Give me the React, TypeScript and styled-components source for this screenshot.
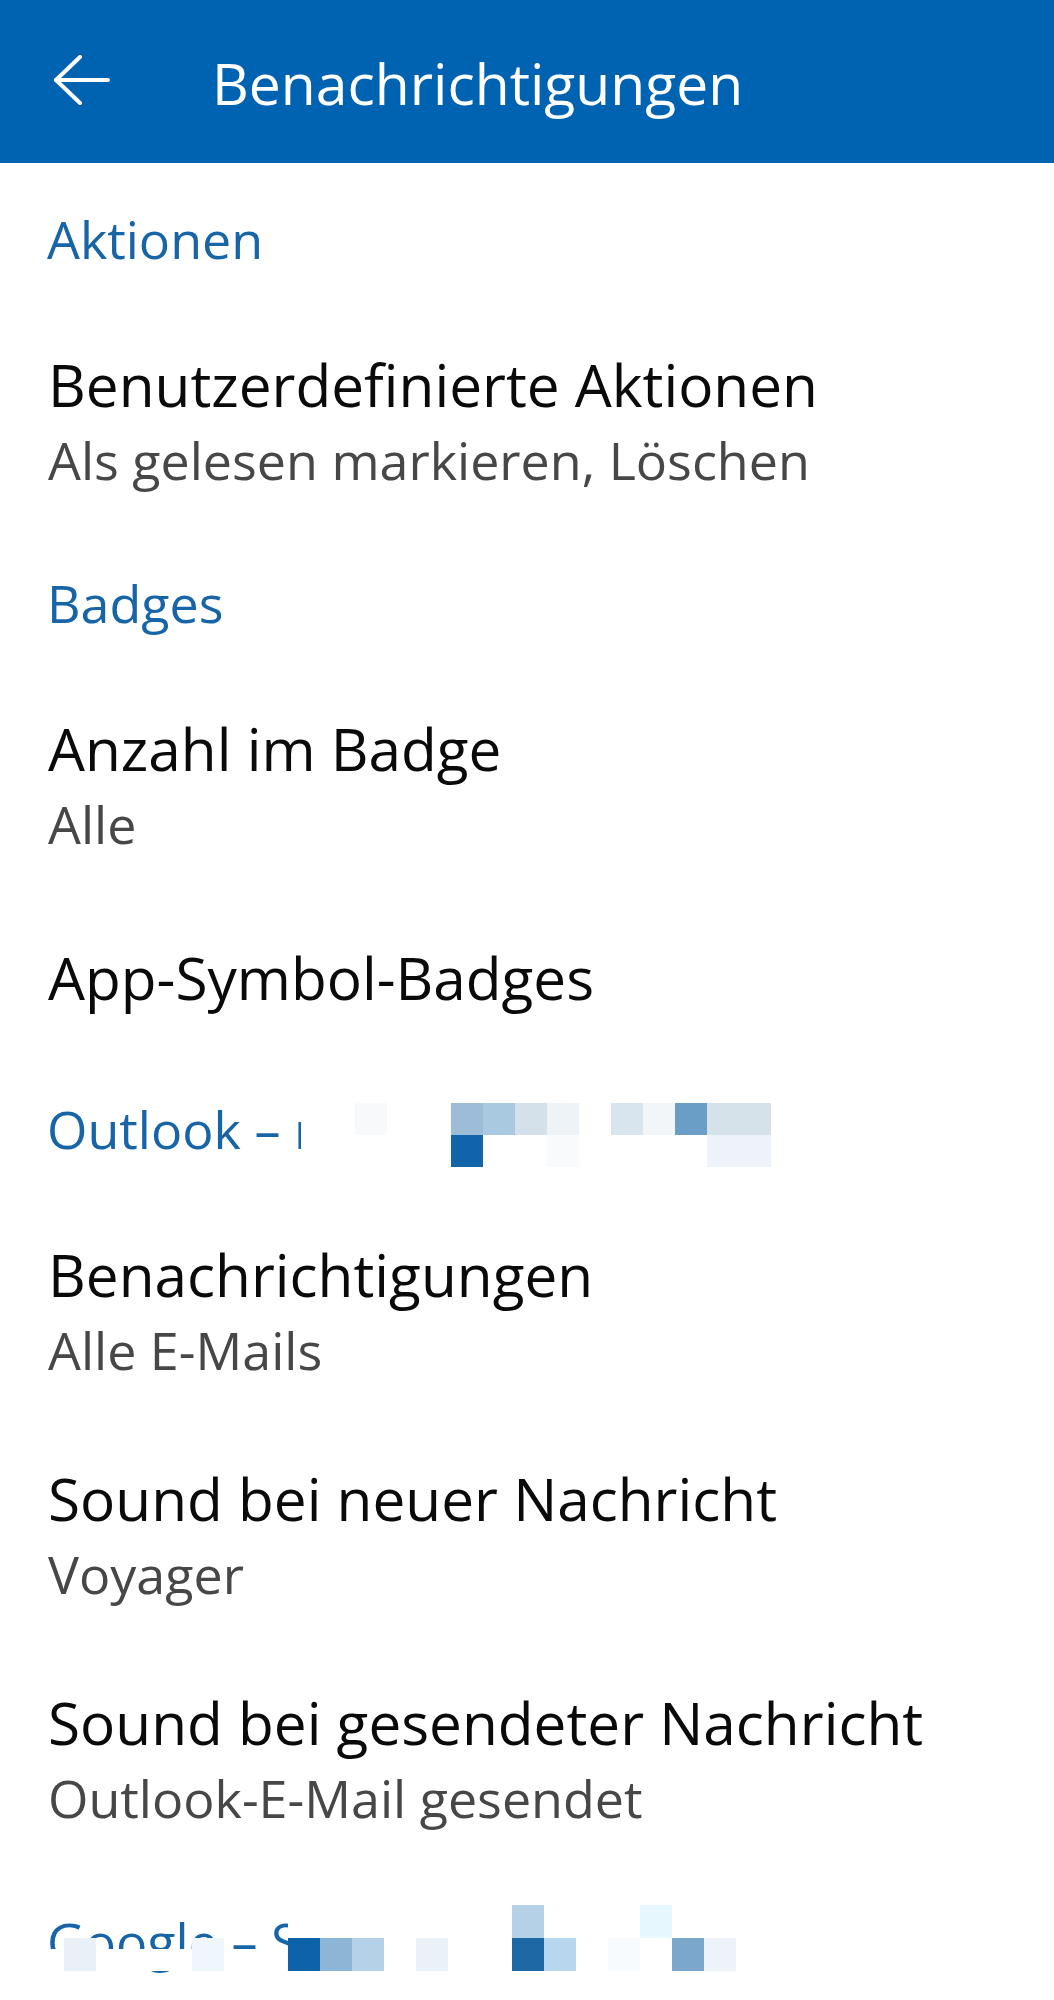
import React from "react";
import styled, { createGlobalStyle } from "styled-components";

const Global = createGlobalStyle`
  html, body { margin: 0; padding: 0; background: #ffffff; }
  body { font-family: "Open Sans", "Noto Sans", sans-serif; -webkit-font-smoothing: antialiased; }
  * { box-sizing: border-box; }
`;

const Page = styled.div`
  width: 1054px;
  min-height: 2000px;
  background: #ffffff;
  overflow: hidden;
`;

const AppBar = styled.header`
  height: 163px;
  background: #0063b1;
  display: flex;
  align-items: center;
  padding-left: 53px;
  gap: 102px;
`;

const BackIcon = styled.svg`
  width: 57px;
  height: 50px;
  flex: none;
  margin-top: -4px;
`;

const AppTitle = styled.h1`
  margin: 0;
  font-family: "Open Sans", sans-serif;
  font-weight: 400;
  font-size: 57px;
  line-height: 1;
  color: #ffffff;
  margin-top: 4px;
`;

const List = styled.main`
  padding-top: 5px;
`;

const SectionHeader = styled.div`
  position: relative;
  height: 140px;
  display: flex;
  align-items: center;
  padding-left: 47px;
  font-size: 52px;
  color: #1764a6;
  white-space: nowrap;
`;

const Item = styled.div<{ $single?: boolean }>`
  padding: ${(p) => (p.$single ? "41px" : "36px")} 0 ${(p) => (p.$single ? "41px" : "36px")} 48px;
  display: flex;
  flex-direction: column;
`;

const Title = styled.div`
  font-size: 58.5px;
  line-height: 80px;
  color: #0a0a0a;
  white-space: nowrap;
`;

const Summary = styled.div`
  font-size: 52px;
  line-height: 72px;
  color: #474747;
  white-space: nowrap;
`;

const Mosaic = styled.div<{ $left: number; $top: number; $cols: string; $rows: string }>`
  position: absolute;
  left: ${(p) => p.$left}px;
  top: ${(p) => p.$top}px;
  display: grid;
  grid-template-columns: ${(p) => p.$cols};
  grid-template-rows: ${(p) => p.$rows};
`;

const Cell = styled.div<{ $c: string; $col: number; $row: string }>`
  background: ${(p) => p.$c};
  grid-column: ${(p) => p.$col};
  grid-row: ${(p) => p.$row};
`;

const W = "#ffffff";

type MCell = { col: number; row: string; c: string };

// Outlook mosaic: leading pad column + 14 columns of 32px, two rows
const outlookRows: string[][] = [
  [W, W, "#f7f9fb", W, W, "#9dbcd8", "#a8c9e0", "#d5e1ea", "#eef3f7", W, "#d8e5ee", "#f3f6f9", "#6a9ec6", "#d6e2ea", "#d6e2ea"],
  [W, W, W, W, W, "#1164a9", W, W, "#f8fafc", W, W, W, W, "#eef3f9", "#eef3f9"],
];
const outlookCells: MCell[] = outlookRows.flatMap((r, ri) =>
  r.map((c, ci) => ({ col: ci + 1, row: String(ri + 1), c }))
);

// Google mosaic: 23 columns; rows: A (33px), B-top (11px), B-bottom (22px)
const googleA: Record<number, string> = { 15: "#b5d1e8", 19: "#e6f7fd" };
const googleB: Record<number, string> = {
  1: "#e8f1f8",
  5: "#eef7fb",
  8: "#0d62a8",
  9: "#8db5d5",
  10: "#b5d1e8",
  12: "#eaf2f9",
  15: "#1e68a5",
  16: "#b8d6ee",
  18: "#f8fbfd",
  20: "#7aa7cb",
  21: "#eef3f9",
};
const googleCells: MCell[] = [];
for (let i = 0; i < 22; i++) {
  if (i >= 8) googleCells.push({ col: i + 1, row: "1", c: googleA[i] ?? W });
  if (googleB[i]) googleCells.push({ col: i + 1, row: "2 / 4", c: googleB[i] });
  else googleCells.push({ col: i + 1, row: "3", c: W });
}

type Entry =
  | { kind: "section"; label: string; mosaic?: "outlook" | "google" }
  | { kind: "item"; title: string; summary?: string };

const entries: Entry[] = [
  { kind: "section", label: "Aktionen" },
  { kind: "item", title: "Benutzerdefinierte Aktionen", summary: "Als gelesen markieren, Löschen" },
  { kind: "section", label: "Badges" },
  { kind: "item", title: "Anzahl im Badge", summary: "Alle" },
  { kind: "item", title: "App-Symbol-Badges" },
  { kind: "section", label: "Outlook – n", mosaic: "outlook" },
  { kind: "item", title: "Benachrichtigungen", summary: "Alle E-Mails" },
  { kind: "item", title: "Sound bei neuer Nachricht", summary: "Voyager" },
  { kind: "item", title: "Sound bei gesendeter Nachricht", summary: "Outlook-E-Mail gesendet" },
  { kind: "section", label: "Google – S", mosaic: "google" },
];

function OutlookMosaic() {
  return (
    <Mosaic $left={301} $top={45} $cols="22px repeat(14, 32px)" $rows="32px 32px">
      {outlookCells.map((m, i) => (
        <Cell key={i} $c={m.c} $col={m.col} $row={m.row} />
      ))}
    </Mosaic>
  );
}

function GoogleMosaic() {
  return (
    <Mosaic $left={32} $top={35} $cols="repeat(23, 32px)" $rows="33px 11px 22px">
      {googleCells.map((m, i) => (
        <Cell key={i} $c={m.c} $col={m.col} $row={m.row} />
      ))}
    </Mosaic>
  );
}

export default function App() {
  return (
    <>
      <Global />
      <Page>
        <AppBar>
          <BackIcon viewBox="0 0 57 50" fill="none" stroke="#ffffff" strokeWidth={4} strokeLinecap="round" strokeLinejoin="round">
            <path d="M3 25 H55" />
            <path d="M27 2 L3 25 L27 48" />
          </BackIcon>
          <AppTitle>Benachrichtigungen</AppTitle>
        </AppBar>
        <List>
          {entries.map((e, i) =>
            e.kind === "section" ? (
              <SectionHeader key={i}>
                {e.label}
                {e.mosaic === "outlook" && <OutlookMosaic />}
                {e.mosaic === "google" && <GoogleMosaic />}
              </SectionHeader>
            ) : (
              <Item key={i} $single={!e.summary}>
                <Title>{e.title}</Title>
                {e.summary && <Summary>{e.summary}</Summary>}
              </Item>
            )
          )}
        </List>
      </Page>
    </>
  );
}
